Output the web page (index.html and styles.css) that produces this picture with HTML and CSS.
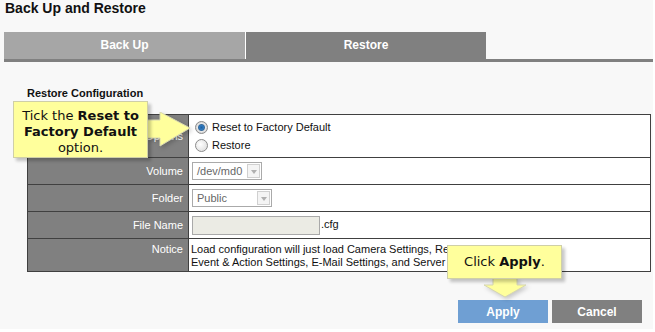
FILE: index.html
```html
<!DOCTYPE html>
<html lang="en">
<head>
    <meta charset="UTF-8">
    <title>Back Up and Restore</title>
    <link rel="stylesheet" href="styles.css">
</head>
<body>
    <div class="page">
        <h1 class="title">Back Up and Restore</h1>

        <div class="tabs">
            <div class="tab tab-off">Back Up</div>
            <div class="tab tab-on">Restore</div>
        </div>

        <h2 class="section">Restore Configuration</h2>

        <table class="form">
            <tr class="row-radio">
                <th>Restore Options</th>
                <td>
                    <div class="radio-line"><span class="radio checked"></span>Reset to Factory Default</div>
                    <div class="radio-line"><span class="radio"></span>Restore</div>
                </td>
            </tr>
            <tr class="row">
                <th>Volume</th>
                <td><span class="select select-vol"><span class="select-text">/dev/md0</span><span class="select-btn"></span></span></td>
            </tr>
            <tr class="row">
                <th>Folder</th>
                <td><span class="select select-folder"><span class="select-text">Public</span><span class="select-btn"></span></span></td>
            </tr>
            <tr class="row">
                <th>File Name</th>
                <td><span class="file-input"></span>.cfg</td>
            </tr>
            <tr class="row-notice">
                <th>Notice</th>
                <td>Load configuration will just load Camera Settings, Recording Settings,<br>Event &amp; Action Settings, E-Mail Settings, and Server Settings.</td>
            </tr>
        </table>

        <div class="actions">
            <button class="btn btn-apply">Apply</button>
            <button class="btn btn-cancel">Cancel</button>
        </div>

        <!-- help callouts -->
        <svg class="arrow arrow-tick" width="50" height="40" viewBox="0 0 50 40">
            <polygon points="0,8 14,8 14,0 44,16 14,34 14,26 0,26" />
        </svg>
        <div class="callout callout-tick">Tick the <b>Reset to</b><br><b>Factory Default</b><br>option.</div>

        <svg class="arrow arrow-apply" width="50" height="24" viewBox="0 0 50 24">
            <polygon points="9,0 33,0 33,7 42,7 21,19 0,7 9,7" />
        </svg>
        <div class="callout callout-apply">Click <b>Apply</b>.</div>
    </div>
</body>
</html>
```

FILE: styles.css
```css
body { margin: 0; background: #fff; font-family: "Liberation Sans", Arial, sans-serif; }
.page { position: relative; width: 653px; height: 329px; background: #f8f8f8; overflow: hidden; }

.title { margin: 0; padding-left: 5px; font-size: 14px; line-height: 17px; color: #111; }

.tabs { display: flex; margin: 15px 0 0 4px; height: 27px; border-bottom: 3px solid #808080; }
.tab { height: 27px; line-height: 27px; text-align: center; color: #fff; font-size: 12px; font-weight: bold; }
.tab-off { width: 241px; background: #a6a6a6; border-right: 1px solid #fff; }
.tab-on { width: 240px; background: #808080; }

.section { margin: 24px 0 0 27px; font-size: 11px; line-height: 14px; color: #111; }

.form { margin: 14px 0 0 27px; width: 624px; border-collapse: collapse; font-size: 11px; color: #111; }
.form th, .form td { border: 1px solid #404040; padding: 0; }
.form th { width: 155px; padding-right: 5px; background: #808080; color: #fff; font-weight: normal; text-align: right; vertical-align: middle; }
.form td { background: #fff; padding-left: 3px; vertical-align: middle; }
.row-radio { height: 43px; }
.row { height: 27px; }
.row-notice { height: 33px; }
.row-notice th, .row-notice td { vertical-align: top; padding-top: 4px; line-height: 13px; }
.row-notice td { padding-left: 2px; }

.radio-line { display: flex; align-items: center; height: 18px; }
.radio { width: 11px; height: 11px; margin: 0 4px 0 3px; border: 1px solid #8c8c8c; border-radius: 50%; background: radial-gradient(circle at 40% 40%, #fff, #d8d8d8); }
.radio.checked { background: radial-gradient(circle, #1e5f9e 0, #2d79c0 2px, #3a6c9c 3px, #e8e8e8 4px, #cfcfcf 6px); }

.select { display: inline-flex; align-items: center; height: 18px; box-sizing: border-box; border: 1px solid #aaa; background: #fff; vertical-align: middle; }
.select-vol { width: 70px; }
.select-folder { width: 80px; }
.select-text { flex: 1; padding-left: 4px; color: #666; font-size: 11px; }
.select-btn { position: relative; width: 13px; height: 14px; margin-right: 1px; box-sizing: border-box; border: 1px solid #d0d0d0; background: #f4f4f4; }
.select-btn::after { content: ""; position: absolute; left: 3px; top: 5px; border-top: 4px solid #b0b0b0; border-left: 3px solid transparent; border-right: 3px solid transparent; }

.file-input { display: inline-block; width: 128px; height: 19px; box-sizing: border-box; border: 1px solid #a9a9a9; background: #ebebe4; vertical-align: middle; margin-right: 1px; }

.actions { display: flex; justify-content: flex-end; gap: 4px; margin-top: 28px; padding-right: 11px; }
.btn { width: 90px; height: 23px; border: none; color: #fff; font-family: "Liberation Sans", Arial, sans-serif; font-size: 12px; font-weight: bold; }
.btn-apply { background: #6f9fd3; }
.btn-cancel { background: #808080; }

.callout { position: absolute; box-sizing: border-box; background: #ffff9c; border: 1px solid #cfcfa8; box-shadow: 3px 3px 3px rgba(0,0,0,0.22); font-family: "DejaVu Sans", Verdana, sans-serif; font-size: 13px; line-height: 16px; color: #111; text-align: center; }
.callout-tick { left: 13px; top: 101px; width: 135px; height: 57px; padding-top: 6px; }
.callout-apply { left: 447px; top: 245px; width: 115px; height: 34px; padding-top: 8px; }

.arrow { position: absolute; filter: drop-shadow(2px 2px 2px rgba(0,0,0,0.2)); }
.arrow polygon { fill: #ffff9c; stroke: #d6d6b0; stroke-width: 1; }
.arrow-tick { left: 146px; top: 112px; }
.arrow-apply { left: 484px; top: 278px; }
```
